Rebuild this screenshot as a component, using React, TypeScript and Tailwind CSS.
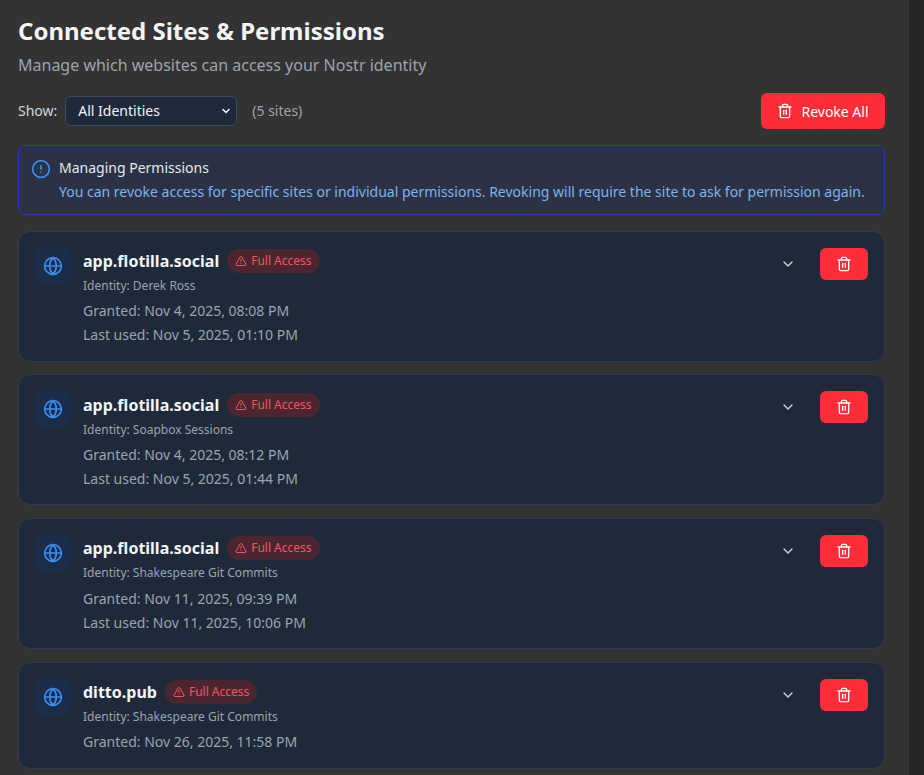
import { AlertTriangle, ChevronDown, Globe, Trash2 } from "lucide-react"

interface Site {
    domain: string
    identity: string
    granted: string
    lastUsed?: string
}

const sites: Site[] = [
    { domain: "app.flotilla.social", identity: "Derek Ross", granted: "Nov 4, 2025, 08:08 PM", lastUsed: "Nov 5, 2025, 01:10 PM" },
    { domain: "app.flotilla.social", identity: "Soapbox Sessions", granted: "Nov 4, 2025, 08:12 PM", lastUsed: "Nov 5, 2025, 01:44 PM" },
    { domain: "app.flotilla.social", identity: "Shakespeare Git Commits", granted: "Nov 11, 2025, 09:39 PM", lastUsed: "Nov 11, 2025, 10:06 PM" },
    { domain: "ditto.pub", identity: "Shakespeare Git Commits", granted: "Nov 26, 2025, 11:58 PM" },
]

function InfoIcon() {
    return (
        <svg width="20" height="20" viewBox="0 0 24 24" fill="none" stroke="#3b8df0" strokeWidth="2" strokeLinecap="round" className="mt-[3px] shrink-0">
            <circle cx="12" cy="12" r="10" />
            <path d="M12 8v4" />
            <path d="M12 16h.01" />
        </svg>
    )
}

function SiteCard({ site }: { site: Site }) {
    return (
        <div className="flex items-start justify-between rounded-xl border border-[#2f3b50] bg-[#1e2a3a] pl-[16px] pr-[16px] pt-[16px] pb-[15.4px]">
            <div className="flex gap-[12px]">
                <div className="flex h-[36px] w-[36px] shrink-0 items-center justify-center rounded-lg bg-[#1c2d4a]">
                    <Globe size={20} color="#3b8df0" />
                </div>
                <div className="flex flex-col">
                    <div className="flex h-[26.3px] items-center gap-[8px]">
                        <span className="text-[16px] leading-[24px] font-bold text-[#f3f4f6]">{site.domain}</span>
                        <span className="flex h-[24px] items-center gap-[4px] rounded-full bg-[#4b2630] px-[8px] text-[12px] text-[#f8545f]">
                            <AlertTriangle size={12} />
                            Full Access
                        </span>
                    </div>
                    <p className="mt-[4px] text-[12px] leading-[16px] text-[#9ca3af]">Identity: {site.identity}</p>
                    <p className="mt-[7.3px] text-[14px] leading-[20px] text-[#9ca3af]">Granted: {site.granted}</p>
                    {site.lastUsed && <p className="mt-[4px] text-[14px] leading-[20px] text-[#9ca3af]">Last used: {site.lastUsed}</p>}
                </div>
            </div>
            <div className="flex items-center gap-[16px]">
                <button className="flex h-[32px] w-[32px] items-center justify-center text-[#d1d5db]">
                    <ChevronDown size={16} />
                </button>
                <button className="flex h-[32px] w-[48px] items-center justify-center rounded-md bg-[#ff2d3a] text-white">
                    <Trash2 size={16} />
                </button>
            </div>
        </div>
    )
}

export default function App() {
    return (
        <div className="flex h-[775px] overflow-hidden bg-[#333333] font-['Noto_Sans',sans-serif]">
            <main className="min-w-0 flex-1 pl-[18px] pr-[24px] pt-[15px]">
                <h1 className="text-[24px] leading-[32px] font-bold text-[#f3f4f6]">Connected Sites &amp; Permissions</h1>
                <p className="mt-[6px] text-[16px] leading-[24px] text-[#9ca3af]">Manage which websites can access your Nostr identity</p>

                <div className="mt-[16px] flex items-center justify-between">
                    <div className="flex items-center gap-[8px]">
                        <span className="text-[14px] leading-[20px] text-[#d1d5db]">Show:</span>
                        <div className="flex h-[30px] w-[172px] items-center justify-between rounded-md border border-[#3d4a60] bg-[#1e2a3a] pl-[12px] pr-[4px] text-[14px] leading-[20px] text-[#f3f4f6]">
                            All Identities
                            <ChevronDown size={12} strokeWidth={3} />
                        </div>
                        <span className="ml-[7px] text-[14px] leading-[20px] text-[#9ca3af]">(5 sites)</span>
                    </div>
                    <button className="flex h-[36px] w-[124px] items-center justify-center gap-[8px] rounded-md bg-[#ff2d3a] text-[14px] text-white">
                        <Trash2 size={16} />
                        Revoke All
                    </button>
                </div>

                <div className="mt-[16px] flex gap-[8px] rounded-lg border border-[#1e40af] bg-[#2b3245] px-[12px] py-[10px]">
                    <InfoIcon />
                    <div>
                        <p className="text-[14px] leading-[24px] text-[#e5e7eb]">Managing Permissions</p>
                        <p className="text-[14px] leading-[24px] text-[#7fb3ee]">You can revoke access for specific sites or individual permissions. Revoking will require the site to ask for permission again.</p>
                    </div>
                </div>

                <div className="mt-[15.8px] flex flex-col gap-[12.6px]">
                    {sites.map((site, i) => <SiteCard key={i} site={site} />)}
                </div>
            </main>
            <div className="w-[15px] shrink-0 bg-[#272727]" />
        </div>
    )
}
